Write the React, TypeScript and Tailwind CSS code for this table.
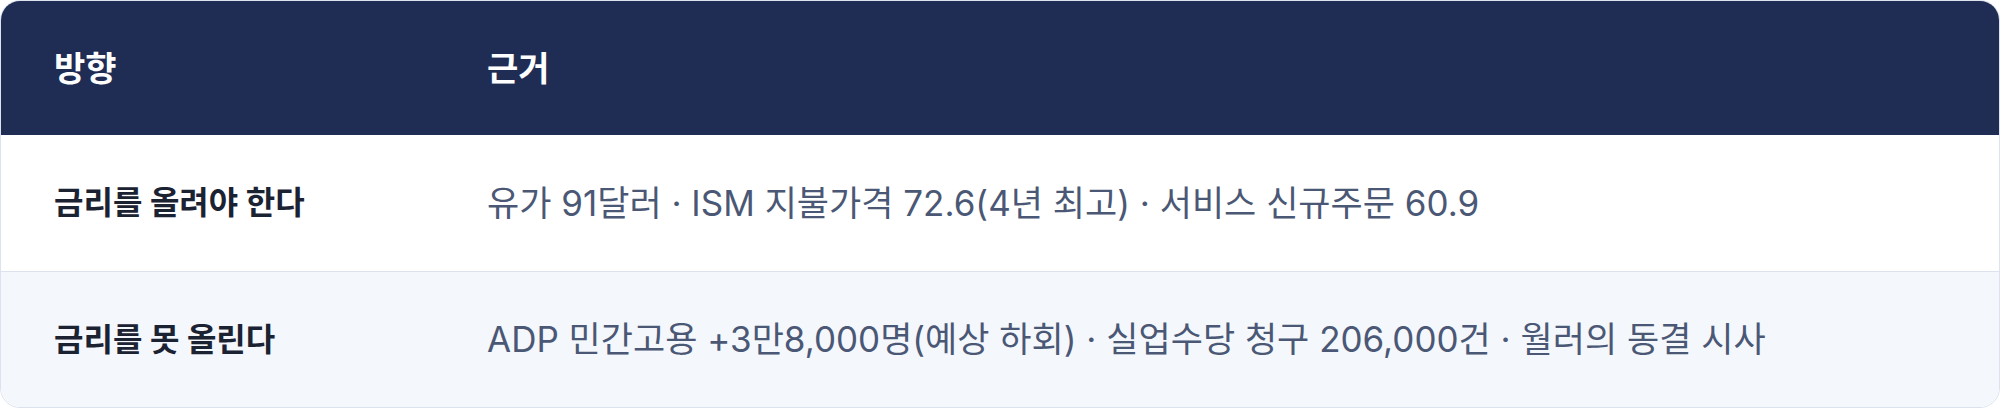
import React from "react";

const rows = [
  {
    dir: "금리를 올려야 한다",
    basis: "유가 91달러 · ISM 지불가격 72.6(4년 최고) · 서비스 신규주문 60.9",
    bg: "bg-white",
  },
  {
    dir: "금리를 못 올린다",
    basis:
      "ADP 민간고용 +3만8,000명(예상 하회) · 실업수당 청구 206,000건 · 월러의 동결 시사",
    bg: "bg-[#f4f7fc]",
  },
];

export default function App() {
  return (
    <div
      className="w-[2000px] h-[408px] bg-white"
      style={{ fontFamily: 'Inter, "Noto Sans CJK KR", sans-serif' }}
    >
      <div className="h-full overflow-hidden rounded-[20px] border border-[#dce2ee]">
        <div className="grid h-[134px] grid-cols-[484px_1fr] items-center bg-[#1f2c54] text-white">
          <div className="pl-[53px] text-[34px] font-bold">방향</div>
          <div className="pl-[2px] text-[34px] font-bold">근거</div>
        </div>
        {rows.map((r, i) => (
          <div
            key={i}
            className={`grid h-[136px] grid-cols-[484px_1fr] items-center ${r.bg} ${
              i > 0 ? "border-t border-[#dce2ee]" : ""
            }`}
          >
            <div className="pl-[53px] text-[32px] font-bold text-[#1b2232]">{r.dir}</div>
            <div className="pl-[2px] text-[35px] text-[#4b5875]">{r.basis}</div>
          </div>
        ))}
      </div>
    </div>
  );
}
